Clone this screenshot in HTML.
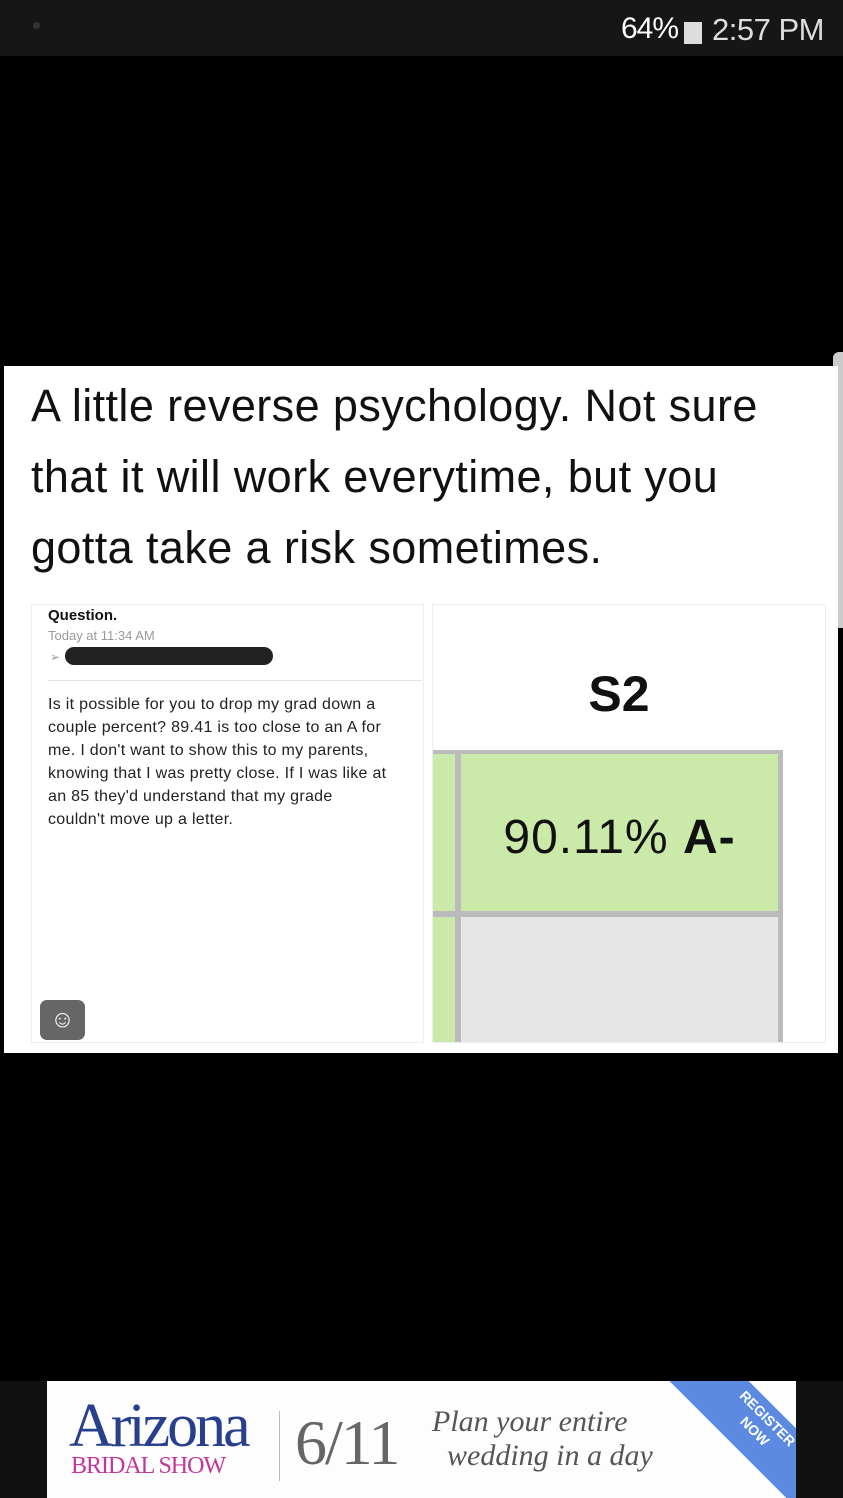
<!DOCTYPE html>
<html><head><meta charset="utf-8"><style>
body{margin:0;width:843px;height:1498px;background:#000;position:relative;overflow:hidden;font-family:"Liberation Sans",sans-serif}
.abs{position:absolute}
</style></head><body>
<div class="abs" style="left:0;top:0;width:843px;height:56px;background:#161616"></div>
<div class="abs" style="left:33px;top:22px;width:7px;height:7px;border-radius:50%;background:#333"></div>
<div class="abs" style="left:621px;top:12px;color:#fff;font-size:30px;letter-spacing:-1px">64%</div>
<div class="abs" style="left:684px;top:22px;width:18px;height:22px;background:#ddd"></div>
<div class="abs" style="left:712px;top:12px;color:#ddd;font-size:31px;letter-spacing:-0.5px">2:57 PM</div>
<div class="abs" style="left:833px;top:352px;width:10px;height:276px;background:#ccc;border-radius:6px 0 0 6px"></div>
<div class="abs" style="left:4px;top:366px;width:834px;height:687px;background:#fff"></div>
<div class="abs" style="left:31px;top:370px;width:770px;font-size:45px;line-height:71px;color:#111;letter-spacing:0.4px">A little reverse psychology. Not sure that it will work everytime, but you gotta take a risk sometimes.</div>
<div class="abs" style="left:31px;top:604px;width:391px;height:437px;border:1px solid #eee;background:#fff"></div>
<div class="abs" style="left:48px;top:607px;font-size:15px;font-weight:bold;color:#111">Question.</div>
<div class="abs" style="left:48px;top:628px;font-size:13px;color:#999">Today at 11:34 AM</div>
<div class="abs" style="left:50px;top:650px;font-size:12px;color:#999">➢</div>
<div class="abs" style="left:65px;top:647px;width:208px;height:18px;border-radius:9px;background:#222"></div>
<div class="abs" style="left:48px;top:680px;width:374px;height:1px;background:#e5e5e5"></div>
<div class="abs" style="left:48px;top:693px;width:342px;font-size:16px;line-height:23px;color:#222;letter-spacing:0.3px">Is it possible for you to drop my grad down a couple percent? 89.41 is too close to an A for me. I don't want to show this to my parents, knowing that I was pretty close. If I was like at an 85 they'd understand that my grade couldn't move up a letter.</div>
<div class="abs" style="left:40px;top:1000px;width:45px;height:40px;border-radius:7px;background:#666;color:#fff;font-size:24px;text-align:center;line-height:40px">☺</div>
<div class="abs" style="left:432px;top:604px;width:392px;height:437px;border:1px solid #eee;background:#fff"></div>
<div class="abs" style="left:432px;top:665px;width:374px;text-align:center;font-size:50px;font-weight:bold;color:#111">S2</div>
<div class="abs" style="left:433px;top:750px;width:350px;height:292px;background:#bbb"></div>
<div class="abs" style="left:433px;top:754px;width:22px;height:157px;background:#cbe9a8"></div>
<div class="abs" style="left:461px;top:754px;width:317px;height:157px;background:#cbe9a8"></div>
<div class="abs" style="left:433px;top:917px;width:22px;height:125px;background:#cbe9a8"></div>
<div class="abs" style="left:461px;top:917px;width:317px;height:125px;background:#e6e6e6"></div>
<div class="abs" style="left:461px;top:810px;width:317px;text-align:center;font-size:48px;color:#111;letter-spacing:1px">90.11% <b>A-</b></div>
<div class="abs" style="left:0;top:1381px;width:843px;height:117px;background:#111"></div>
<div class="abs" style="left:47px;top:1381px;width:749px;height:117px;background:#fdfdfd;overflow:hidden">
<div class="abs" style="left:22px;top:10px;font-family:'Liberation Serif',serif;font-size:62px;color:#273f8c;letter-spacing:-3px">Arizona</div>
<div class="abs" style="left:24px;top:72px;font-family:'Liberation Serif',serif;font-size:24px;color:#c3379b;letter-spacing:-1px">BRIDAL SHOW</div>
<div class="abs" style="left:232px;top:30px;width:1px;height:70px;background:#bbb"></div>
<div class="abs" style="left:248px;top:25px;font-family:'Liberation Serif',serif;font-size:64px;color:#666;letter-spacing:-2px">6/11</div>
<div class="abs" style="left:385px;top:24px;font-family:'Liberation Serif',serif;font-style:italic;font-size:30px;color:#555;line-height:34px">Plan your entire<br>&nbsp;&nbsp;wedding in a day</div>
<div class="abs" style="left:610px;top:20px;width:200px;height:56px;background:#5b8ae0;transform:rotate(45deg);color:#fff;font-size:14px;font-weight:bold;text-align:center;line-height:18px;padding-top:4px;box-sizing:border-box">REGISTER<br>NOW</div>
</div>
</body></html>
